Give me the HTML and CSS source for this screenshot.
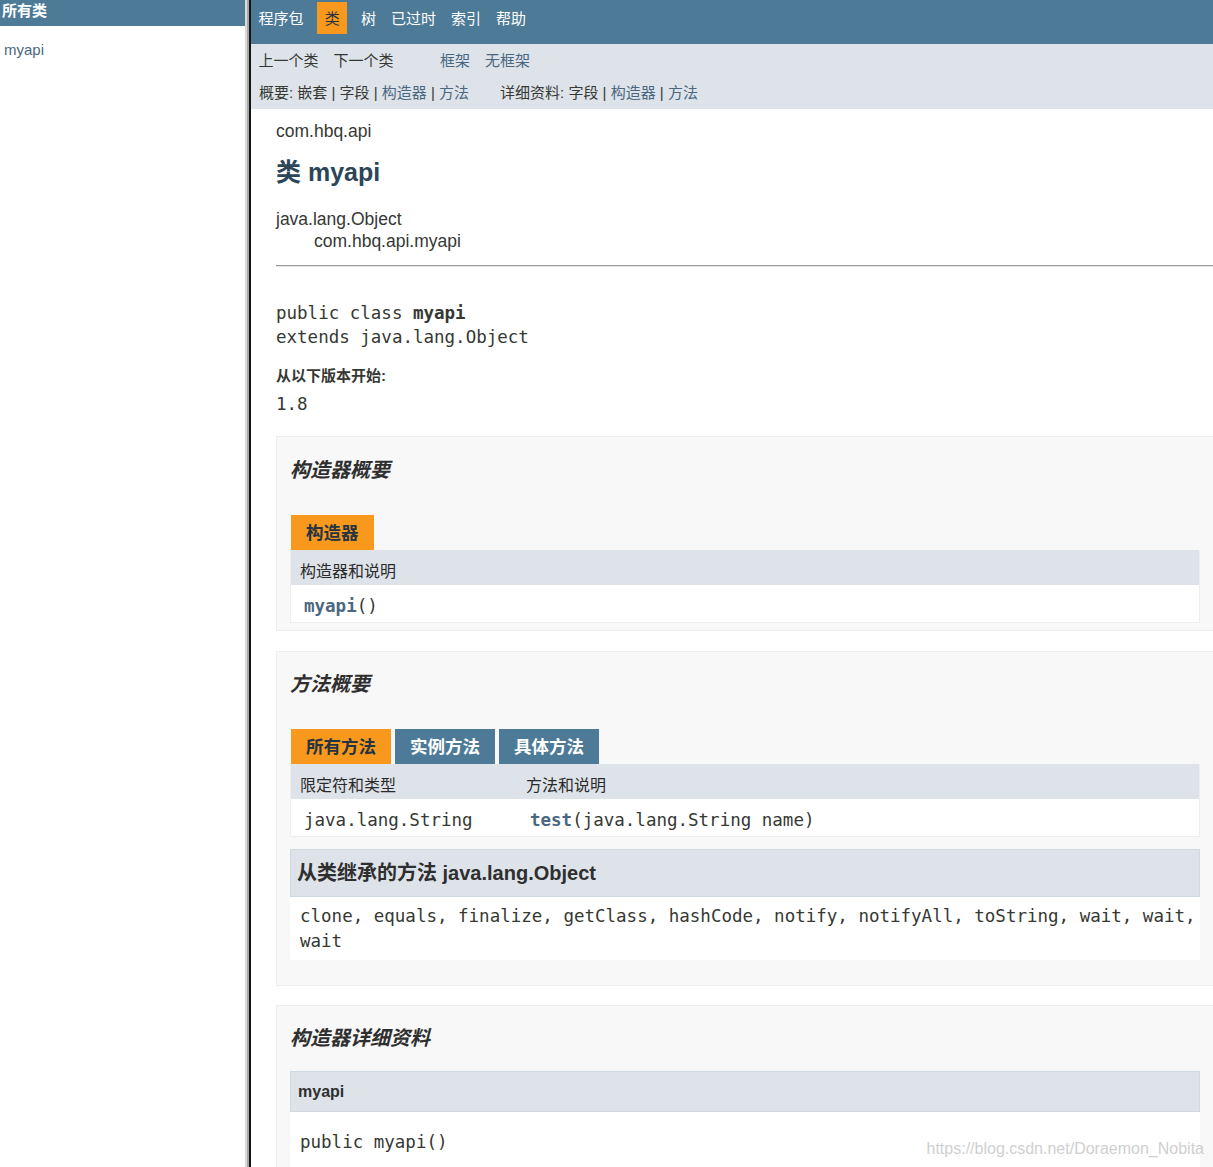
FILE: index.html
```html
<!DOCTYPE html>
<html lang="zh-CN">
<head>
<meta charset="utf-8">
<title>myapi</title>
<link rel="stylesheet" href="styles.css">
</head>
<body>
<div class="frames">
  <aside class="left-frame">
    <h1 class="bar-title">所有类</h1>
    <ul class="class-list"><li><a href="#">myapi</a></li></ul>
  </aside>
  <div class="divider"></div>
  <div class="right-frame">
    <nav class="top-nav">
      <ul class="nav-list">
        <li><a href="#">程序包</a></li>
        <li class="nav-current">类</li>
        <li><a href="#">树</a></li>
        <li><a href="#">已过时</a></li>
        <li><a href="#">索引</a></li>
        <li><a href="#">帮助</a></li>
      </ul>
    </nav>
    <div class="sub-nav">
      <div class="sub-row">
        <ul class="nav-list">
          <li>上一个类</li>
          <li>下一个类</li>
        </ul>
        <ul class="nav-list frame-links">
          <li><a href="#">框架</a></li>
          <li><a href="#">无框架</a></li>
        </ul>
      </div>
      <div class="sub-row">
        <div class="sub-group">概要:&nbsp;嵌套&nbsp;|&nbsp;字段&nbsp;|&nbsp;<a href="#">构造器</a>&nbsp;|&nbsp;<a href="#">方法</a></div>
        <div class="sub-group detail-group">详细资料:&nbsp;字段&nbsp;|&nbsp;<a href="#">构造器</a>&nbsp;|&nbsp;<a href="#">方法</a></div>
      </div>
    </div>

    <div class="content">
      <div class="sub-title">com.hbq.api</div>
      <h2 class="title">类 myapi</h2>
      <ul class="inheritance">
        <li>java.lang.Object
          <ul class="inheritance nested"><li>com.hbq.api.myapi</li></ul>
        </li>
      </ul>
      <hr class="rule">
      <pre class="signature">public class <b>myapi</b>
extends java.lang.Object</pre>
      <dl class="since">
        <dt>从以下版本开始:</dt>
        <dd>1.8</dd>
      </dl>

      <section class="block block-ctor">
        <h3 class="block-title">构造器概要</h3>
        <div class="tabs"><span class="tab tab-active tab-single">构造器</span></div>
        <table class="summary">
          <tr><th>构造器和说明</th></tr>
          <tr><td><code><a class="member" href="#">myapi</a>()</code></td></tr>
        </table>
      </section>

      <section class="block block-methods">
        <h3 class="block-title">方法概要</h3>
        <div class="tabs">
          <span class="tab tab-active">所有方法</span>
          <span class="tab">实例方法</span>
          <span class="tab">具体方法</span>
        </div>
        <table class="summary">
          <tr><th class="col-first">限定符和类型</th><th>方法和说明</th></tr>
          <tr><td class="col-first"><code>java.lang.String</code></td><td><code><a class="member" href="#">test</a>(java.lang.String&nbsp;name)</code></td></tr>
        </table>
        <div class="inherited">
          <h3 class="inherited-title">从类继承的方法&nbsp;java.lang.Object</h3>
          <div class="inherited-body"><code>clone, equals, finalize, getClass, hashCode, notify, notifyAll, toString, wait, wait, wait</code></div>
        </div>
      </section>

      <section class="block block-detail">
        <h3 class="block-title">构造器详细资料</h3>
        <div class="detail">
          <h4 class="detail-title">myapi</h4>
          <pre class="detail-sig">public&nbsp;myapi()</pre>
        </div>
      </section>
    </div>
  </div>
</div>
<div class="watermark">https://blog.csdn.net/Doraemon_Nobita</div>
</body>
</html>
```

FILE: styles.css
```css
html, body {
  margin: 0;
  padding: 0;
  height: 100%;
  overflow: hidden;
}

body {
  font-family: "Liberation Sans", "Noto Sans CJK SC", sans-serif;
  color: #353833;
  background: #ffffff;
}

a {
  color: #4A6782;
  text-decoration: none;
}

.frames {
  display: flex;
  height: 1167px;
}

/* ---------- left frame ---------- */
.left-frame {
  width: 245px;
  flex: none;
  background: #ffffff;
}

.bar-title {
  margin: 0;
  height: 26px;
  padding-left: 2px;
  background: #4D7A97;
  color: #ffffff;
  font-size: 15px;
  font-weight: bold;
  line-height: 21px;
}

.class-list {
  list-style: none;
  margin: 14px 0 0;
  padding: 0 0 0 4px;
  font-size: 15px;
  line-height: 20px;
}

.divider {
  width: 6px;
  flex: none;
  background: linear-gradient(to right, #dadada 0, #dadada 2px, #a8a8a8 2px, #a8a8a8 4px, #151515 4px, #151515 6px);
}

/* ---------- right frame ---------- */
.right-frame {
  flex: 1;
  min-width: 0;
  overflow: hidden;
}

.nav-list {
  list-style: none;
  margin: 0;
  padding: 0;
  display: flex;
}

.nav-list li {
  padding: 0 7.5px;
}

.top-nav {
  height: 44px;
  background: #4D7A97;
  font-size: 15px;
}

.top-nav .nav-list {
  padding-top: 2px;
}

.top-nav li {
  height: 32px;
  box-sizing: border-box;
  padding-top: 1px;
  line-height: 31px;
  color: #ffffff;
}

.top-nav a {
  color: #ffffff;
}

.top-nav .nav-current {
  margin: 0 6.25px;
  background: #F8981D;
  color: #253441;
}

.sub-nav {
  height: 65px;
  box-sizing: border-box;
  padding-top: 1px;
  background: #dee3e9;
  font-size: 15px;
}

.sub-row {
  display: flex;
  height: 32px;
  line-height: 32px;
}

.frame-links {
  margin-left: 31.5px;
}

.sub-group {
  padding-left: 8px;
  white-space: nowrap;
}

.detail-group {
  margin-left: 23px;
}

/* ---------- content ---------- */
.content {
  padding-left: 25px;
  margin-right: -1px;
}

.sub-title {
  margin-top: 11px;
  font-size: 17.5px;
  line-height: 22px;
}

.title {
  margin: 15px 0 0;
  font-size: 25px;
  line-height: 30px;
  font-weight: bold;
  color: #2c4557;
}

.inheritance {
  list-style: none;
  margin: 21px 0 0;
  padding: 0;
  font-size: 17.5px;
  line-height: 22px;
}

.inheritance.nested {
  margin: 0;
  padding-left: 38px;
}

.rule {
  margin: 13px 0 0;
  height: 0;
  border: 0;
  border-top: 1px solid #9a9a9a;
  border-bottom: 1px solid #e4e4e4;
}

pre, code {
  font-family: "DejaVu Sans Mono", monospace;
  font-size: 17.5px;
}

.signature {
  margin: 34px 0 0;
  line-height: 24px;
}

.since {
  margin: 17px 0 0;
}

.since dt {
  font-size: 15px;
  line-height: 20px;
  font-weight: bold;
}

.since dd {
  margin: 6px 0 0;
  font-family: "DejaVu Sans Mono", monospace;
  font-size: 17.5px;
  line-height: 24px;
}

.block {
  margin-top: 20px;
  padding: 20px 13px 8px;
  background: #f8f8f8;
  border: 1px solid #ededed;
}

.block-ctor {
  padding-bottom: 7px;
}

.block-methods {
  padding-top: 19px;
  padding-bottom: 25px;
}

.block-detail {
  margin-top: 19px;
  padding-top: 19px;
  padding-bottom: 0;
}

.block-title {
  margin: 0;
  font-size: 20px;
  line-height: 26px;
  font-style: italic;
  font-weight: bold;
  color: #2f2f2f;
}

.tabs {
  display: flex;
  gap: 4px;
  margin-top: 32px;
  padding-left: 1px;
}

.tab {
  height: 35px;
  box-sizing: border-box;
  padding: 2px 15px 0;
  line-height: 33px;
  font-size: 17.5px;
  font-weight: bold;
  background: #4D7A97;
  color: #ffffff;
}

.tab-active {
  background: #F8981D;
  color: #253441;
}

.tab-single {
  padding-right: 15px;
}

.summary {
  width: 100%;
  border-collapse: separate;
  border-spacing: 0;
  border: 1px solid #eeeeee;
  border-top: 0;
}

.summary th {
  height: 35px;
  box-sizing: border-box;
  background: #dee3e9;
  text-align: left;
  font-size: 16px;
  font-weight: normal;
  color: #2a2a2a;
  line-height: 21px;
  padding: 11px 4px 3px 9px;
}

.summary td {
  height: 37px;
  box-sizing: border-box;
  background: #ffffff;
  padding: 10px 4px 4px 13px;
  line-height: 23px;
  white-space: nowrap;
}

.summary .col-first {
  width: 226px;
}

.member {
  font-weight: bold;
  color: #4A6782;
}

.inherited {
  margin-top: 12px;
}

.inherited-title {
  margin: 0;
  padding: 11px 6px;
  background: #dee3e9;
  border: 1px solid #d0d9e0;
  font-size: 20px;
  line-height: 24px;
  font-weight: bold;
  color: #2f2f2f;
}

.inherited-body {
  background: #ffffff;
  padding: 7px 0 6px 10px;
  line-height: 24px;
}

.detail-title {
  margin: 20px 0 0;
  padding: 10px 7px 9px;
  background: #dee3e9;
  border: 1px solid #d0d9e0;
  font-size: 16px;
  line-height: 20px;
  font-weight: bold;
  color: #2f2f2f;
}

.detail-sig {
  margin: 0;
  background: #ffffff;
  padding: 18px 0 40px 10px;
  line-height: 24px;
}

.watermark {
  position: absolute;
  right: 9px;
  top: 1139px;
  font-family: "Liberation Sans", sans-serif;
  font-size: 16px;
  line-height: 20px;
  color: #cfcfcf;
}
```
